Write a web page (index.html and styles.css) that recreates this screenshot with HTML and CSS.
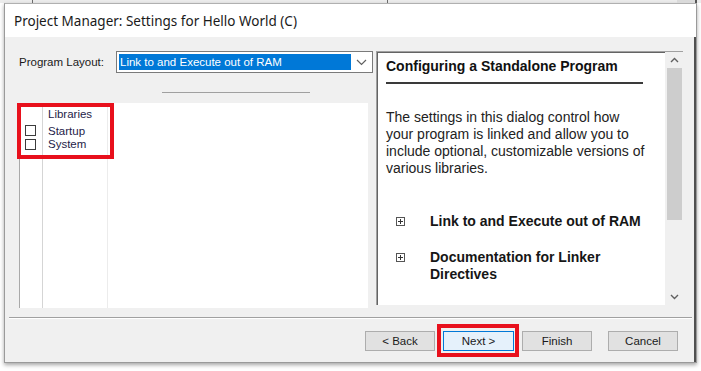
FILE: index.html
```html
<!DOCTYPE html>
<html>
<head>
<meta charset="utf-8">
<link rel="stylesheet" href="styles.css">
</head>
<body>
<div class="backdrop">
  <span class="bd a"></span><span class="bd b"></span><span class="bd c"></span><span class="bd d"></span>
</div>
<div class="window">
  <div class="titlebar">Project Manager: Settings for Hello World (C)</div>
  <div class="client">
    <div class="main">
      <div class="left">
        <div class="layout-row">
          <span class="lbl">Program Layout:</span>
          <div class="combo">
            <span class="combo-sel">Link to and Execute out of RAM</span>
            <svg class="combo-arrow" width="11" height="7" viewBox="0 0 11 7"><polyline points="1,1 5.5,5.5 10,1" fill="none" stroke="#606060" stroke-width="1.2"/></svg>
          </div>
        </div>
        <div class="sep-short"></div>
        <div class="list">
          <div class="col c1">
            <div class="hdr"></div>
            <div class="row"><span class="chk"></span></div>
            <div class="row"><span class="chk"></span></div>
          </div>
          <div class="col c2">
            <div class="hdr">Libraries</div>
            <div class="row">Startup</div>
            <div class="row">System</div>
          </div>
          <div class="col c3"></div>
          <div class="annot list-annot"></div>
        </div>
      </div>
      <div class="right">
        <div class="help">
          <div class="help-pane">
            <div class="h-title">Configuring a Standalone Program</div>
            <div class="h-rule"></div>
            <p class="h-body">The settings in this dialog control how your program is linked and allow you to include optional, customizable versions of various libraries.</p>
            <div class="h-item first"><span class="plus"></span><span class="h-item-text">Link to and Execute out of RAM</span></div>
            <div class="h-item second"><span class="plus"></span><span class="h-item-text">Documentation for Linker Directives</span></div>
          </div>
          <div class="scrollbar">
            <div class="sb-btn"><svg width="9" height="6" viewBox="0 0 9 6"><polyline points="1,5 4.5,1.5 8,5" fill="none" stroke="#606060" stroke-width="1.4"/></svg></div>
            <div class="sb-thumb"></div>
            <div class="sb-track"></div>
            <div class="sb-btn"><svg width="9" height="6" viewBox="0 0 9 6"><polyline points="1,1 4.5,4.5 8,1" fill="none" stroke="#606060" stroke-width="1.4"/></svg></div>
          </div>
        </div>
      </div>
    </div>
    <div class="sep-long"></div>
    <div class="buttons">
      <button class="btn">&lt; Back</button>
      <div class="next-wrap"><button class="btn primary">Next &gt;</button><span class="annot next-annot"></span></div>
      <button class="btn">Finish</button>
      <button class="btn cancel">Cancel</button>
    </div>
  </div>
</div>
</body>
</html>
```
FILE: styles.css
```css
* { box-sizing: border-box; }
html, body { margin: 0; padding: 0; }
body {
  width: 701px;
  height: 371px;
  overflow: hidden;
  background: #ffffff;
  font-family: "Liberation Sans", Arial, sans-serif;
}
.backdrop {
  height: 3px;
  display: flex;
  background: #ececec;
}
.bd { display: block; height: 3px; }
.bd.a { width: 32px; }
.bd.b { width: 355px; border-left: 1px solid #6a6a6a; }
.bd.c { width: 290px; border-left: 1px solid #6a6a6a; }
.bd.d { width: 20px; background: #dadada; border-right: 2px solid #555; }

.window {
  margin-left: 4px;
  width: 693px;
  height: 360px;
  border: 1px solid #9a9a9a;
  border-top-color: #b0b0b0;
  background: #f0f0f0;
  box-shadow: 0 2px 4px rgba(0,0,0,0.35);
  display: flex;
  flex-direction: column;
}
.titlebar {
  height: 33px;
  background: #ffffff;
  padding-left: 9px;
  display: flex;
  align-items: center;
  font-family: "Noto Sans", "Open Sans", sans-serif;
  font-size: 13.5px;
  color: #1a1a1a;
}
.client {
  flex: 1;
  background: #f0f0f0;
  border-right: 2px solid #505050;
  display: flex;
  flex-direction: column;
}
.main {
  height: 280px;
  display: flex;
  align-items: flex-start;
  padding-left: 12px;
}
.left {
  width: 356px;
  display: flex;
  flex-direction: column;
}
.layout-row {
  margin-top: 14px;
  height: 22px;
  display: flex;
  align-items: center;
}
.lbl {
  width: 99px;
  padding-left: 2px;
  font-size: 11.5px;
  color: #1a1a1a;
}
.combo {
  width: 257px;
  height: 22px;
  border: 1px solid #7a7a7a;
  background: #ffffff;
  padding: 2px;
  display: flex;
  align-items: flex-start;
}
.combo-sel {
  width: 232px;
  height: 16px;
  background: #0078d7;
  color: #ffffff;
  font-size: 11.5px;
  line-height: 16px;
  padding-left: 1px;
  white-space: nowrap;
}
.combo-arrow { margin-left: 5px; margin-top: 5px; }

.sep-short {
  margin-top: 19px;
  margin-left: 145px;
  width: 148px;
  height: 1px;
  background: #a0a0a0;
}
.list {
  position: relative;
  margin-top: 10px;
  margin-left: 2px;
  width: 349px;
  height: 205px;
  background: #ffffff;
  border-left: 1px solid #a9a9a9;
  display: flex;
  padding-top: 4px;
  font-size: 11.5px;
  color: #1e2248;
}
.col { height: 100%; }
.c1 { width: 23px; border-right: 1px solid #d5d5d5; padding-left: 5px; }
.c2 { width: 65px; border-right: 1px solid #ececec; padding-left: 5px; }
.c3 { flex: 1; }
.hdr { height: 14px; line-height: 14px; margin-bottom: 4px; }
.row { height: 13px; line-height: 13px; }
.chk {
  display: block;
  width: 11px;
  height: 11px;
  margin-top: 1px;
  border: 1px solid #3c3c3c;
  background: #ffffff;
}
.annot {
  position: absolute;
  border: 4px solid #e8101c;
  pointer-events: none;
}
.list-annot {
  left: -3px;
  top: 0;
  width: 97px;
  height: 56px;
}

.right { margin-left: 3px; margin-top: 14px; }
.help {
  width: 307px;
  height: 254px;
  display: flex;
  border-top: 1px solid #a0a0a0;
  border-left: 1px solid #a0a0a0;
}
.help-pane {
  width: 288px;
  height: 100%;
  background: #ffffff;
  border-top: 1px solid #646464;
  border-left: 1px solid #646464;
  padding: 5px 8px 0 8px;
  color: #1a1a1a;
  font-size: 14px;
}
.h-title {
  font-weight: bold;
  height: 17px;
  line-height: 17px;
  color: #111;
}
.h-rule {
  margin-top: 7px;
  width: 257px;
  height: 2px;
  background: #3a3a3a;
}
.h-body {
  margin: 25px 0 0 0;
  line-height: 17px;
  width: 260px;
  color: #222;
}
.h-item {
  display: flex;
  align-items: flex-start;
  font-weight: bold;
  line-height: 17px;
  color: #161616;
}
.h-item.first { margin-top: 36px; }
.h-item.second { margin-top: 19px; }
.plus {
  position: relative;
  flex: none;
  width: 9px;
  height: 9px;
  margin-left: 10px;
  margin-top: 4px;
  margin-right: 25px;
  border: 1px solid #555;
  background: linear-gradient(#333,#333) center/5px 1px no-repeat, linear-gradient(#333,#333) center/1px 5px no-repeat;
}
.h-item-text { width: 220px; }
.scrollbar {
  width: 18px;
  height: 100%;
  display: flex;
  flex-direction: column;
  background: #f0f0f0;
  padding-left: 1px;
}
.sb-btn {
  height: 16px;
  display: flex;
  align-items: center;
  justify-content: center;
}
.sb-thumb {
  height: 152px;
  background: #cdcdcd;
  margin: 0 0 0 1px;
  width: 15px;
}
.sb-track { flex: 1; }

.sep-long {
  margin: 0 2px 0 4px;
  height: 2px;
  border-top: 1px solid #a0a0a0;
  border-bottom: 1px solid #ffffff;
}
.buttons {
  margin-top: 12px;
  display: flex;
  justify-content: flex-end;
  padding-right: 16px;
  gap: 8px;
}
.btn {
  width: 70px;
  height: 20px;
  border: 1px solid #adadad;
  background: #e1e1e1;
  font-family: "Liberation Sans", Arial, sans-serif;
  font-size: 11.5px;
  color: #1a1a1a;
  padding: 0;
  margin: 0;
}
.next-wrap { position: relative; display: flex; }
.btn.primary {
  width: 71px;
  background: #e5f1fb;
  border: 1px solid #0078d7;
}
.next-annot {
  left: -6px;
  top: -7px;
  right: -5px;
  bottom: -6px;
}
.btn.cancel { margin-left: 8px; }
```
